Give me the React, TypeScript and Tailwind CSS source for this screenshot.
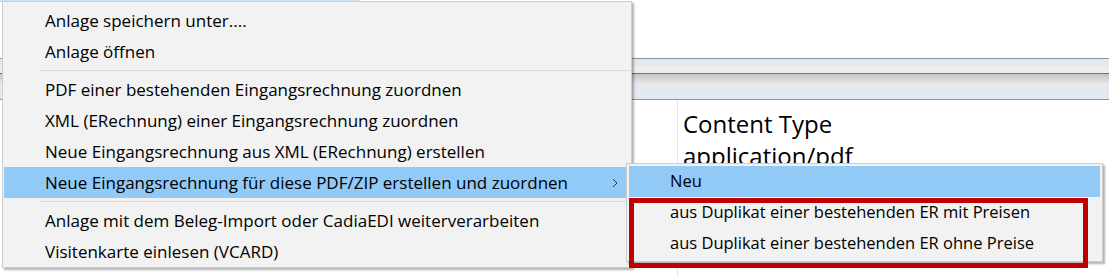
import { ReactNode } from "react";

const FONT = { fontFamily: '"Open Sans", "Noto Sans", sans-serif' };

type Entry = { label: string; active?: boolean; sub?: boolean } | "sep";

const mainItems: Entry[] = [
  { label: "Anlage speichern unter...." },
  { label: "Anlage öffnen" },
  "sep",
  { label: "PDF einer bestehenden Eingangsrechnung zuordnen" },
  { label: "XML (ERechnung) einer Eingangsrechnung zuordnen" },
  { label: "Neue Eingangsrechnung aus XML (ERechnung) erstellen" },
  { label: "Neue Eingangsrechnung für diese PDF/ZIP erstellen und zuordnen", active: true, sub: true },
  "sep",
  { label: "Anlage mit dem Beleg-Import oder CadiaEDI weiterverarbeiten" },
  { label: "Visitenkarte einlesen (VCARD)" },
];

const subItems: Entry[] = [
  { label: "Neu", active: true },
  { label: "aus Duplikat einer bestehenden ER mit Preisen" },
  { label: "aus Duplikat einer bestehenden ER ohne Preise" },
];

function MenuRow({
  label,
  active,
  sub,
  size,
}: {
  label: string;
  active?: boolean;
  sub?: boolean;
  size: string;
}) {
  return (
    <div
      className={`flex h-[31px] items-center justify-between pl-[41px] pr-[10px] text-black ${size} ${
        active ? "bg-[#91c9f7]" : ""
      }`}
    >
      <span className="whitespace-nowrap leading-none">{label}</span>
      {sub && (
        <svg width="6" height="10" viewBox="0 0 6 10" className="mr-[2px]">
          <path d="M1 1 L5 5 L1 9" fill="none" stroke="#333" strokeWidth="1" />
        </svg>
      )}
    </div>
  );
}

function Menu({
  items,
  className,
  size,
}: {
  items: Entry[];
  className: string;
  size: string;
}): ReactNode {
  return (
    <div
      className={`absolute flex flex-col border border-[#cccccc] bg-[#f2f2f2] shadow-[2px_2px_2px_rgba(0,0,0,0.3)] ${className}`}
    >
      {items.map((it, i) =>
        it === "sep" ? (
          <div key={i} className="flex h-[7px] items-center pl-[37px]">
            <div className="h-px w-full bg-[#d7d7d7]" />
          </div>
        ) : (
          <MenuRow key={i} size={size} {...it} />
        )
      )}
    </div>
  );
}

export default function App() {
  return (
    <div className="relative h-[277px] w-[1109px] overflow-hidden bg-white" style={FONT}>
      {/* window behind the menu */}
      <div className="flex h-full flex-col">
        <div className="h-[2px] w-[360px] bg-[#cfe3f5]" />
        <div className="h-[56px]" />
        <div className="flex h-[42px] flex-col">
          <div className="h-px bg-[#8c939c]" />
          <div className="h-[7px] bg-[#e3e9f1]" />
          <div className="h-[7px] bg-[#eeeeee]" />
          <div className="h-px bg-[#6f7378]" />
          <div className="h-[11px] bg-gradient-to-b from-[#c4c4c4] to-[#ececec]" />
          <div className="h-[14px] bg-[#e3e9f1]" />
          <div className="h-px bg-[#8c939c]" />
        </div>
        <div className="flex flex-1">
          <div className="w-[677px] shrink-0" />
          <div className="flex flex-1 flex-col border-l border-[#e6e6e6] pl-[5px] pt-[8px] text-[24px] leading-[32px] text-black">
            <span>Content Type</span>
            <span>application/pdf</span>
          </div>
        </div>
      </div>

      <Menu
        items={mainItems}
        size="text-[17px]"
        className="left-[2px] top-[1px] w-[630px] px-[1px] pt-[3px]"
      />
      <Menu
        items={subItems}
        size="text-[16.5px]"
        className="left-[626px] top-[163px] w-[477px] p-[2px]"
      />

      {/* red annotation frame */}
      <div className="absolute left-[629px] top-[198px] h-[70px] w-[459px] border-[5px] border-[#c00000]" />
    </div>
  );
}
